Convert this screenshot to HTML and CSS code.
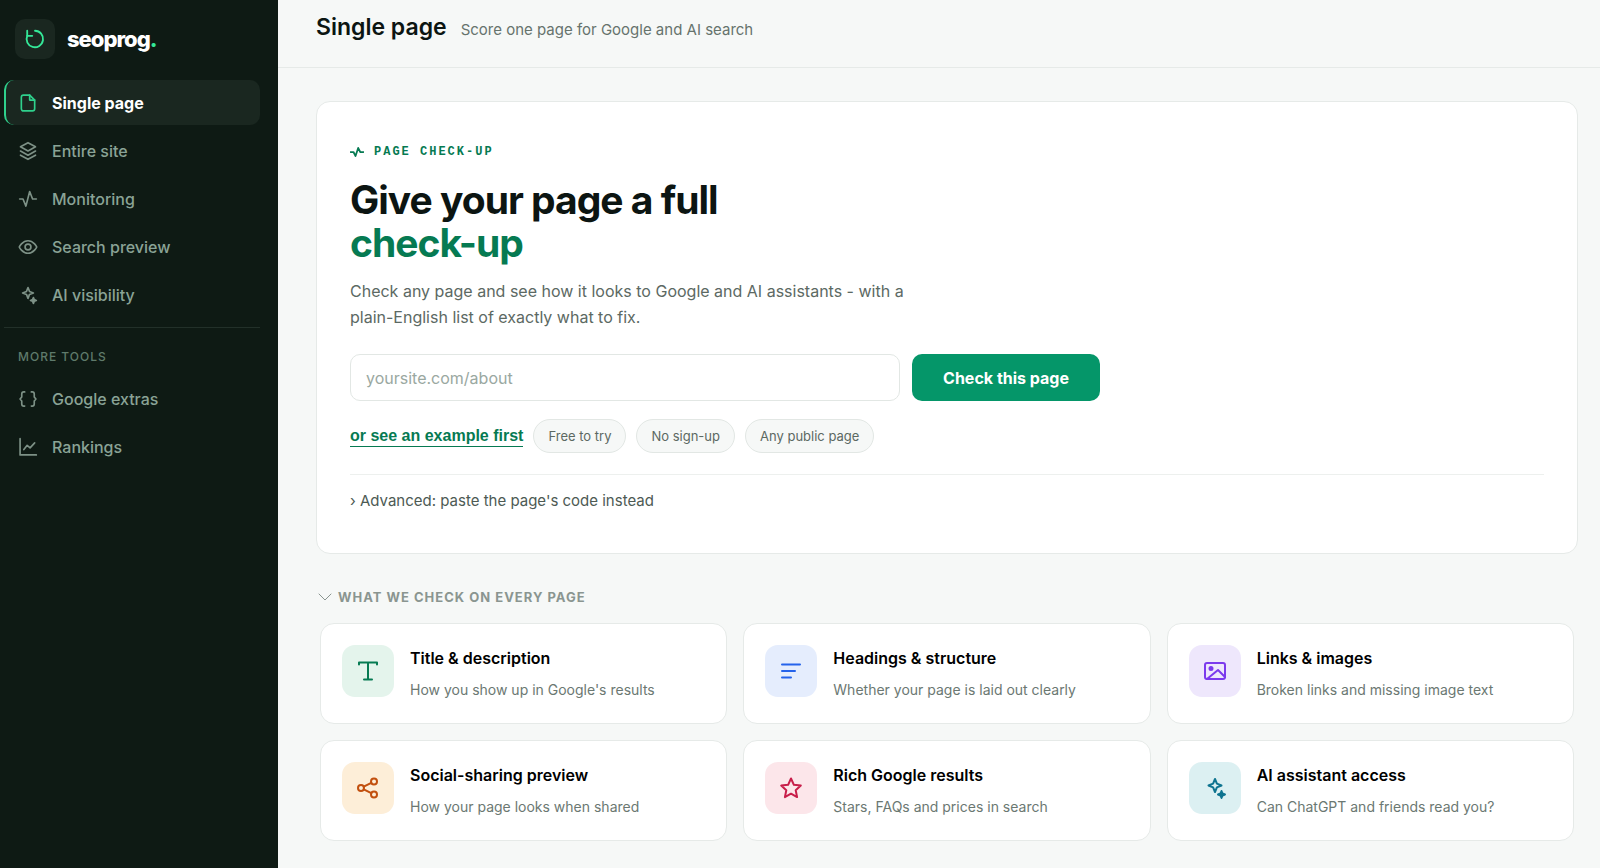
FILE: index.html
```html
<!DOCTYPE html>
<html lang="en">
<head>
    <meta charset="UTF-8">
    <meta name="viewport" content="width=device-width, initial-scale=1.0">
    <title>seoprog - Single page</title>
    <link rel="stylesheet" href="styles.css">
</head>
<body>
    <div class="app">
        <aside class="sidebar">
            <a href="#" class="brand">
                <span class="brand-mark">
                    <svg viewBox="0 0 24 24" width="22" height="22"><path d="M3.500 3v5.500H9"/><path d="M3.500 8.500A9 9 0 1 0 12 3"/></svg>
                </span>
                <span class="brand-name">seoprog<span class="brand-dot">.</span></span>
            </a>

            <nav class="nav">
                <a href="#" class="nav-item active">
                    <svg viewBox="0 0 24 24"><path d="M14 2.500H6.500A2.500 2.500 0 0 0 4 5v14a2.500 2.500 0 0 0 2.500 2.500h11A2.500 2.500 0 0 0 20 19V8.500z"/><path d="M14 2.500v6h6"/></svg>
                    Single page
                </a>
                <a href="#" class="nav-item">
                    <svg viewBox="0 0 24 24"><path d="M12 2 3 7l9 5 9-5z"/><path d="m3 12 9 5 9-5"/><path d="m3 17 9 5 9-5"/></svg>
                    Entire site
                </a>
                <a href="#" class="nav-item">
                    <svg viewBox="0 0 24 24"><path d="M2 12h4l3.500 8.500L14 3l3.500 9H22"/></svg>
                    Monitoring
                </a>
                <a href="#" class="nav-item">
                    <svg viewBox="0 0 24 24"><path d="M1.500 12S5 4.500 12 4.500 22.500 12 22.500 12 19 19.500 12 19.500 1.500 12 1.500 12z"/><circle cx="12" cy="12" r="3.500"/></svg>
                    Search preview
                </a>
                <a href="#" class="nav-item">
                    <svg viewBox="0 0 24 24"><path d="m12 3 1.800 4.700L18.500 9.500l-4.700 1.800L12 16l-1.800-4.700L5.500 9.500l4.700-1.800z"/><path class="solid" d="m18.500 15 1 2.500 2.500 1-2.500 1-1 2.500-1-2.500-2.500-1 2.500-1z"/></svg>
                    AI visibility
                </a>
            </nav>

            <nav class="nav nav-more">
                <h2 class="nav-label">More tools</h2>
                <a href="#" class="nav-item">
                    <svg viewBox="0 0 24 24"><path d="M8 3.500H7a2.500 2.500 0 0 0-2.500 2.500v3.500L2.500 12l2 2.500V18A2.500 2.500 0 0 0 7 20.500h1"/><path d="M16 3.500h1a2.500 2.500 0 0 1 2.500 2.500v3.500l2 2.500-2 2.500V18a2.500 2.500 0 0 1-2.500 2.500h-1"/></svg>
                    Google extras
                </a>
                <a href="#" class="nav-item">
                    <svg viewBox="0 0 24 24"><path d="M2.500 2v19.500H22"/><path d="m7 15 4-5 3.500 3L20 7"/></svg>
                    Rankings
                </a>
            </nav>
        </aside>

        <main class="main">
            <header class="topbar">
                <h1 class="topbar-title">Single page</h1>
                <p class="topbar-sub">Score one page for Google and AI search</p>
            </header>

            <div class="content">
                <section class="hero">
                    <p class="eyebrow">
                        <svg viewBox="0 0 24 24" width="14" height="14"><path d="M1 12h5l3.500 7L14 5l3.500 7H23"/></svg>
                        Page check-up
                    </p>
                    <h2 class="hero-title">Give your page a full<br><span>check-up</span></h2>
                    <p class="hero-text">Check any page and see how it looks to Google and AI assistants - with a plain-English list of exactly what to fix.</p>

                    <form class="check-form">
                        <input type="text" class="url-input" placeholder="yoursite.com/about" aria-label="Page address">
                        <button type="button" class="check-btn">Check this page</button>
                    </form>

                    <div class="hints">
                        <a href="#" class="example-link">or see an example first</a>
                        <span class="chip">Free to try</span>
                        <span class="chip">No sign-up</span>
                        <span class="chip">Any public page</span>
                    </div>

                    <div class="advanced">
                        <button type="button" class="advanced-btn">› Advanced: paste the page's code instead</button>
                    </div>
                </section>

                <section class="checks">
                    <button type="button" class="checks-toggle">
                        <svg viewBox="0 0 14 14" width="14" height="14"><path d="m1 4 6 6 6-6"/></svg>
                        What we check on every page
                    </button>

                    <div class="checks-grid">
                        <article class="check-card">
                            <span class="check-icon green">
                                <svg viewBox="0 0 24 24"><path d="M3 5.500V3.500h18v2M12 3.500v17M8 20.500h8"/></svg>
                            </span>
                            <div class="check-body">
                                <h3>Title &amp; description</h3>
                                <p>How you show up in Google's results</p>
                            </div>
                        </article>
                        <article class="check-card">
                            <span class="check-icon blue">
                                <svg viewBox="0 0 24 24"><path d="M3 5.500h18M3 12h13M3 18.500h9"/></svg>
                            </span>
                            <div class="check-body">
                                <h3>Headings &amp; structure</h3>
                                <p>Whether your page is laid out clearly</p>
                            </div>
                        </article>
                        <article class="check-card">
                            <span class="check-icon purple">
                                <svg viewBox="0 0 24 24"><rect x="2" y="4" width="20" height="16" rx="2"/><circle class="solid" cx="8" cy="9.500" r="1.500"/><path d="m4 20 11-9 7 7"/></svg>
                            </span>
                            <div class="check-body">
                                <h3>Links &amp; images</h3>
                                <p>Broken links and missing image text</p>
                            </div>
                        </article>
                        <article class="check-card">
                            <span class="check-icon orange">
                                <svg viewBox="0 0 24 24"><circle cx="5" cy="12" r="3"/><circle cx="18" cy="5.500" r="3"/><circle cx="18" cy="18.500" r="3"/><path d="m7.700 10.700 7.600-3.900M7.700 13.300l7.600 3.900"/></svg>
                            </span>
                            <div class="check-body">
                                <h3>Social-sharing preview</h3>
                                <p>How your page looks when shared</p>
                            </div>
                        </article>
                        <article class="check-card">
                            <span class="check-icon red">
                                <svg viewBox="0 0 24 24"><path d="m12 2.500 2.900 6.300 6.900.8-5.100 4.700 1.400 6.800-6.100-3.400-6.100 3.400 1.400-6.800-5.100-4.700 6.900-.8z"/></svg>
                            </span>
                            <div class="check-body">
                                <h3>Rich Google results</h3>
                                <p>Stars, FAQs and prices in search</p>
                            </div>
                        </article>
                        <article class="check-card">
                            <span class="check-icon teal">
                                <svg viewBox="0 0 24 24"><path d="m12 3 1.900 4.600L18.500 9.500l-4.600 1.900L12 16l-1.900-4.600L5.500 9.500l4.600-1.900z"/><path class="solid" d="m18.500 15 1 2.500 2.500 1-2.500 1-1 2.500-1-2.500-2.500-1 2.500-1z"/></svg>
                            </span>
                            <div class="check-body">
                                <h3>AI assistant access</h3>
                                <p>Can ChatGPT and friends read you?</p>
                            </div>
                        </article>
                    </div>
                </section>
            </div>
        </main>
    </div>
</body>
</html>
```
FILE: styles.css
```css
* {
    margin: 0;
    padding: 0;
    box-sizing: border-box;
}

body {
    font-family: Inter, "Liberation Sans", sans-serif;
    background: #f6f8f7;
    color: #0c1512;
}

a {
    color: inherit;
    text-decoration: none;
}

button, input {
    font: inherit;
}

button {
    border: none;
    background: none;
    cursor: pointer;
}

svg {
    flex: none;
    fill: none;
    stroke: currentColor;
    stroke-width: 2;
    stroke-linecap: round;
    stroke-linejoin: round;
}

svg .solid {
    fill: currentColor;
}

.app {
    display: flex;
    min-height: 100vh;
}

/* Sidebar */
.sidebar {
    flex: none;
    width: 278px;
    padding: 19px 18px 24px 4px;
    background: #0e1a14;
}

.brand {
    display: flex;
    align-items: center;
    gap: 12px;
    padding-left: 11px;
    margin-bottom: 21px;
}

.brand-mark {
    display: flex;
    align-items: center;
    justify-content: center;
    width: 40px;
    height: 40px;
    border-radius: 10px;
    background: #1a2720;
    color: #34e898;
}

.brand-name {
    font-size: 22px;
    line-height: 24px;
    font-weight: 800;
    letter-spacing: -1px;
    color: #ffffff;
}

.brand-dot {
    color: #34e898;
}

.nav {
    display: flex;
    flex-direction: column;
    gap: 3px;
}

.nav-item {
    display: flex;
    align-items: center;
    gap: 14px;
    height: 45px;
    padding-left: 12px;
    border-left: 2px solid transparent;
    border-radius: 10px;
    font-size: 16px;
    font-weight: 500;
    color: #8aa396;
}

.nav-item svg {
    width: 20px;
    height: 20px;
    color: #7d9186;
}

.nav-item.active {
    background: #1a2720;
    border-left-color: #2fd08c;
    color: #ffffff;
    font-weight: 700;
}

.nav-item.active svg {
    color: #2fd08c;
}

.nav-more {
    margin-top: 10px;
    padding-top: 21px;
    border-top: 1px solid #223029;
}

.nav-label {
    padding: 0 14px 8px;
    font-size: 12px;
    line-height: 16px;
    font-weight: 500;
    letter-spacing: 1px;
    text-transform: uppercase;
    color: #5f7a6b;
}

/* Main */
.main {
    flex: 1;
    min-width: 0;
}

.topbar {
    display: flex;
    align-items: baseline;
    gap: 14px;
    height: 68px;
    padding: 12px 38px;
    border-bottom: 1px solid #e6eae8;
}

.topbar-title {
    font-size: 23px;
    line-height: 30px;
    font-weight: 600;
}

.topbar-sub {
    font-size: 15px;
    color: #66736d;
}

.content {
    padding: 33px 22px 24px 38px;
}

.hero {
    padding: 40px 33px 42px;
    background: #ffffff;
    border: 1px solid #e6eae8;
    border-radius: 14px;
}

.eyebrow {
    display: flex;
    align-items: center;
    gap: 10px;
    font-family: "Liberation Mono", monospace;
    font-size: 12px;
    line-height: 20px;
    font-weight: 700;
    letter-spacing: 2px;
    text-transform: uppercase;
    color: #067a52;
}

.eyebrow svg {
    stroke-width: 3;
}

.hero-title {
    margin-top: 16px;
    font-size: 39px;
    line-height: 43px;
    font-weight: 700;
    letter-spacing: -1px;
}

.hero-title span {
    color: #067a52;
}

.hero-text {
    max-width: 600px;
    margin-top: 14px;
    font-size: 16px;
    line-height: 26px;
    color: #5c6963;
}

.check-form {
    display: flex;
    gap: 12px;
    max-width: 750px;
    margin-top: 24px;
}

.url-input {
    flex: 1;
    min-width: 0;
    height: 47px;
    padding: 0 15px;
    border: 1px solid #e2e7e4;
    border-radius: 10px;
    background: #ffffff;
    font-size: 16px;
    color: #0c1512;
}

.url-input::placeholder {
    color: #9aa8a1;
}

.check-btn {
    padding: 0 31px;
    border-radius: 10px;
    background: #059669;
    color: #ffffff;
    font-size: 16px;
    font-weight: 700;
}

.hints {
    display: flex;
    flex-wrap: wrap;
    align-items: center;
    gap: 10px;
    margin-top: 18px;
}

.example-link {
    border-bottom: 1px solid #067a52;
    font-size: 16px;
    line-height: 20px;
    font-family: "Liberation Sans", sans-serif;
    font-weight: 700;
    color: #067a52;
}

.chip {
    padding: 0 14px;
    border: 1px solid #e2e7e4;
    border-radius: 17px;
    background: #f6f8f7;
    font-size: 13px;
    line-height: 32px;
    color: #5c6963;
}

.advanced {
    margin-top: 21px;
    padding-top: 16px;
    border-top: 1px solid #edf0ee;
}

.advanced-btn {
    display: block;
    font-size: 15px;
    line-height: 20px;
    color: #4d5a54;
}

.checks {
    padding: 0 4px;
    margin-top: 33px;
}

.checks-toggle {
    display: flex;
    align-items: center;
    gap: 6px;
    margin-left: -2px;
    font-size: 13px;
    line-height: 20px;
    font-weight: 700;
    letter-spacing: 1px;
    text-transform: uppercase;
    color: #8a9590;
}

.checks-toggle svg {
    stroke-width: 1;
}

.checks-grid {
    display: grid;
    grid-template-columns: repeat(3, 1fr);
    gap: 16px;
    margin-top: 16px;
}

.check-card {
    display: flex;
    gap: 16px;
    min-height: 101px;
    padding: 21px;
    background: #ffffff;
    border: 1px solid #e6eae8;
    border-radius: 14px;
}

.check-icon {
    flex: none;
    display: flex;
    align-items: center;
    justify-content: center;
    width: 52px;
    height: 52px;
    border-radius: 13px;
}

.check-icon svg {
    width: 24px;
    height: 24px;
}

.green {
    background: #e4f4ec;
    color: #067a52;
}

.blue {
    background: #e5edfd;
    color: #2563eb;
}

.purple {
    background: #eee7fc;
    color: #7c3aed;
}

.orange {
    background: #fdeed8;
    color: #c2500f;
}

.red {
    background: #fce6ea;
    color: #c81e4a;
}

.teal {
    background: #dcf0f2;
    color: #0e7490;
}

.check-body {
    min-width: 0;
    padding-top: 1px;
}

.check-body h3 {
    font-size: 16px;
    line-height: 24px;
    font-weight: 600;
    color: #000000;
}

.check-body p {
    margin-top: 10px;
    font-size: 14px;
    line-height: 20px;
    color: #6b7872;
}

@media (max-width: 900px) {
    .checks-grid {
        grid-template-columns: 1fr;
    }
}
```
